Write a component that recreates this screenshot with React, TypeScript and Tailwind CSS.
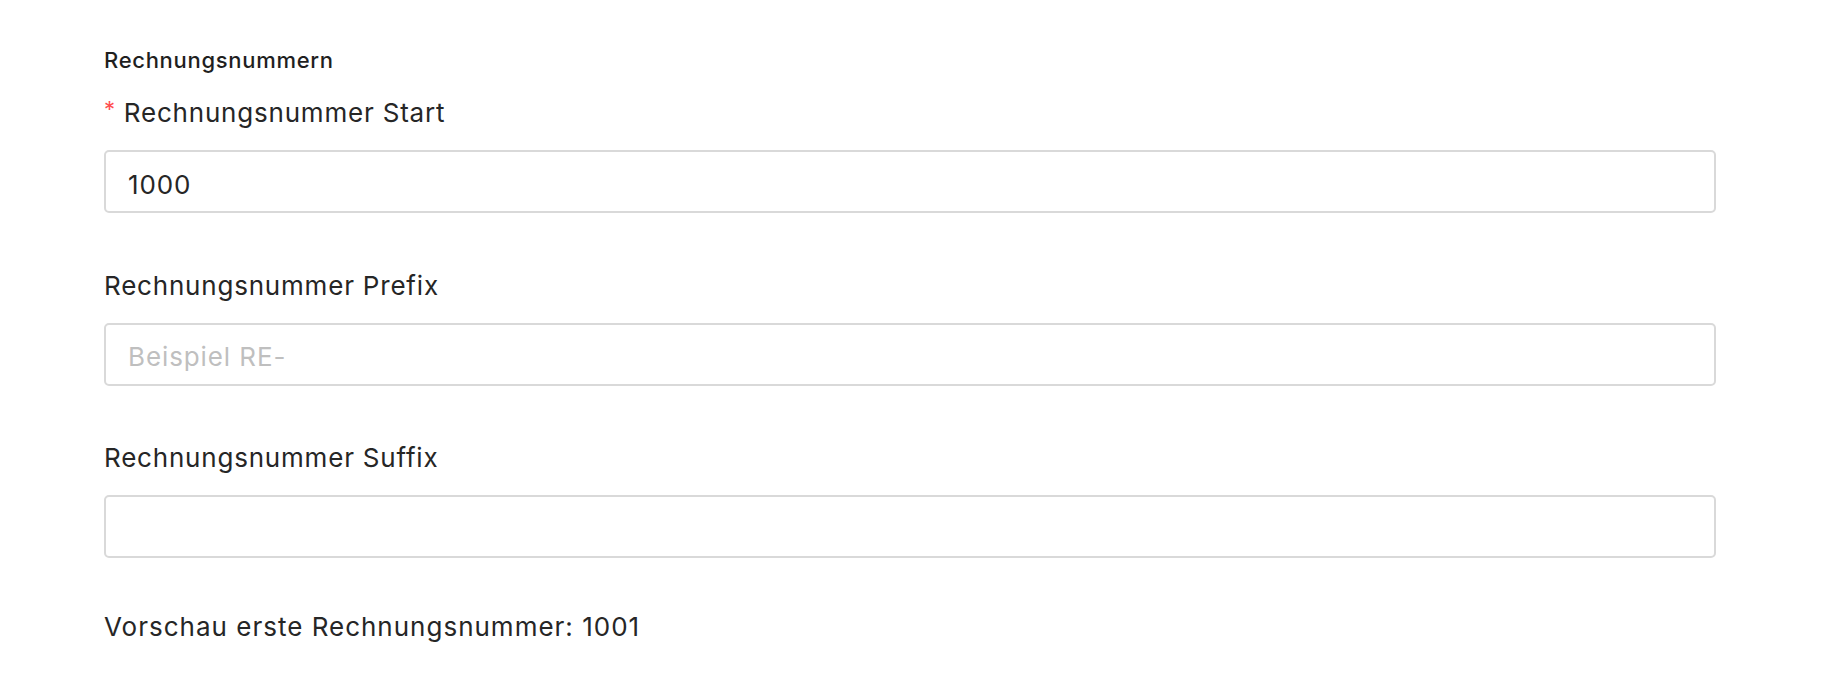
import React, { useState } from 'react';

function Field({
  label,
  required,
  value,
  placeholder,
  onChange,
}: {
  label: string;
  required?: boolean;
  value: string;
  placeholder?: string;
  onChange: (v: string) => void;
}) {
  return (
    <div className="flex flex-col">
      <label className="flex items-center h-[40px] text-[26px] leading-[40px] tracking-[0.8px] text-[#262626]">
        {required && (
          <span className="mr-[8px] text-[22px] leading-none text-[#ff4d4f] -translate-y-[4px]">*</span>
        )}
        {label}
      </label>
      <input
        type="text"
        value={value}
        placeholder={placeholder}
        onChange={e => onChange(e.target.value)}
        className="mt-[17px] h-[63px] w-full rounded-[5px] border-2 border-[#d9d9d9] bg-white px-[22px] pt-[5px] text-[26px] tracking-[0.9px] text-[#262626] outline-none placeholder:text-[#bfbfbf]"
      />
    </div>
  );
}

export default function App() {
  const [start, setStart] = useState('1000');
  const [prefix, setPrefix] = useState('');
  const [suffix, setSuffix] = useState('');

  const num = parseInt(start, 10);
  const preview = `${prefix}${isNaN(num) ? '' : num + 1}${suffix}`;

  return (
    <div className="min-h-screen bg-white" style={{ fontFamily: 'Inter, "Noto Sans", sans-serif' }}>
      <div className="ml-[104px] w-[1612px] pt-[44px]">
        <h2 className="text-[22px] leading-[32px] font-medium tracking-[0.7px] text-[#1f1f1f]">Rechnungsnummern</h2>

        <div className="mt-[17px] flex flex-col gap-[52.5px]">
          <Field label="Rechnungsnummer Start" required value={start} onChange={setStart} />
          <Field label="Rechnungsnummer Prefix" value={prefix} placeholder="Beispiel RE-" onChange={setPrefix} />
          <Field label="Rechnungsnummer Suffix" value={suffix} onChange={setSuffix} />
        </div>

        <p className="mt-[49px] text-[26px] leading-[40px] tracking-[1px] text-[#262626]">
          Vorschau erste Rechnungsnummer: {preview}
        </p>
      </div>
    </div>
  );
}
